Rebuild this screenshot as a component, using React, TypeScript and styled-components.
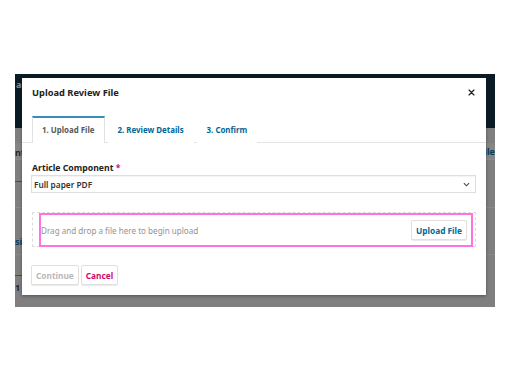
import React from "react";
import styled, { createGlobalStyle } from "styled-components";

const GlobalStyle = createGlobalStyle`
  html, body {
    margin: 0;
    padding: 0;
    background: #ffffff;
    font-family: "Noto Sans", "Open Sans", sans-serif;
  }
`;

const Page = styled.div`
  width: 510px;
  height: 382px;
  padding-top: 74px;
  padding-left: 15px;
  box-sizing: border-box;
`;

// dimmed page behind the modal
const Backdrop = styled.div`
  position: relative;
  width: 480px;
  height: 233px;
  background: #7f7f7f;
  display: flex;
  flex-direction: column;
  overflow: hidden;
`;

const DarkBand = styled.div`
  height: 54px;
  flex-shrink: 0;
  background: #0b1b25;
  color: #8a8f93;
  font-size: 9px;
  font-weight: 700;
  padding: 4px 0 0 1px;
  box-sizing: border-box;
`;

const BgRow = styled.div<{ h: number; tone?: string; line?: string; accent?: boolean; align?: string }>`
  position: relative;
  flex-shrink: 0;
  height: ${(p) => p.h}px;
  background: ${(p) => p.tone || "transparent"};
  border-bottom: ${(p) => (p.line ? `1px solid ${p.line}` : "none")};
  display: flex;
  align-items: ${(p) => p.align || "center"};
  justify-content: space-between;
  font-size: 9px;
  font-weight: 700;
  box-sizing: border-box;

  &::after {
    content: "";
    display: ${(p) => (p.accent ? "block" : "none")};
    position: absolute;
    left: 0;
    bottom: -1px;
    width: 7px;
    height: 1px;
    background: #1d5a7c;
  }
`;

const BgText = styled.span<{ color: string; pad?: number }>`
  color: ${(p) => p.color};
  padding-top: ${(p) => p.pad || 0}px;
`;

const Modal = styled.div`
  position: absolute;
  left: 7px;
  top: 4px;
  width: 464px;
  height: 217px;
  background: #ffffff;
  box-shadow: 0 1px 3px rgba(0, 0, 0, 0.35);
  display: flex;
  flex-direction: column;
`;

const Header = styled.div`
  display: flex;
  align-items: center;
  justify-content: space-between;
  height: 28px;
  padding: 0 10px;
`;

const Title = styled.h1`
  margin: 0;
  font-size: 9.3px;
  font-weight: 700;
  color: #222222;
`;

const Close = styled.button`
  border: none;
  background: none;
  padding: 0;
  width: 10px;
  height: 10px;
  display: flex;
  align-items: center;
  justify-content: center;
  cursor: pointer;
`;

const TabBar = styled.div`
  display: flex;
  margin-top: 10px;
  padding-left: 10px;
  border-bottom: 1px solid #e4e4e4;
  height: 27px;
  box-sizing: border-box;
`;

const Tab = styled.div<{ active?: boolean }>`
  display: flex;
  align-items: center;
  padding: 0 9px 1px;
  margin-right: 3px;
  font-size: 7.9px;
  font-weight: 700;
  color: ${(p) => (p.active ? "#5a5a5a" : "#006798")};
  background: #ffffff;
  border-top: 2px solid ${(p) => (p.active ? "#3a8cba" : "transparent")};
  border-left: 1px solid ${(p) => (p.active ? "#e2e2e2" : "transparent")};
  border-right: 1px solid ${(p) => (p.active ? "#e2e2e2" : "transparent")};
  height: 27px;
  box-sizing: border-box;
`;

const Body = styled.div`
  display: flex;
  flex-direction: column;
  padding: 19px 10px 0 9px;
`;

const Label = styled.label`
  font-size: 8.7px;
  font-weight: 700;
  color: #222222;
  padding-left: 1px;
  line-height: 12px;
`;

const Req = styled.span`
  color: #d00a6c;
`;

const Select = styled.div`
  margin-top: 1px;
  height: 18px;
  border: 1px solid #dedede;
  box-shadow: inset 0 1px 1px rgba(0, 0, 0, 0.05);
  display: flex;
  align-items: center;
  justify-content: space-between;
  padding: 0 5px 0 2px;
  font-size: 8.3px;
  font-weight: 600;
  color: #333333;
  box-sizing: border-box;
`;

const DropWrap = styled.div`
  margin-top: 19px;
  margin-left: 1px;
  border: 1px dashed #dcdcdc;
  height: 35px;
  box-sizing: border-box;
  display: flex;
`;

const DropZone = styled.div`
  flex: 1;
  margin: 0 2px -1px 6px;
  border: 2px solid #ff72e2;
  display: flex;
  align-items: center;
  justify-content: space-between;
  padding: 0 4px 0 0;
  box-sizing: border-box;
`;

const DropText = styled.span`
  font-size: 8.1px;
  color: #949494;
`;

const Button = styled.button<{ tone: "blue" | "pink" | "muted" }>`
  height: 20px;
  padding: 0 4px;
  background: #ffffff;
  border: 1px solid #e0e0e0;
  border-radius: 2px;
  box-shadow: 0 1px 0 #eaeaea;
  font-family: "Noto Sans", "Open Sans", sans-serif;
  font-size: 8.3px;
  font-weight: 700;
  color: ${(p) =>
    p.tone === "blue" ? "#006798" : p.tone === "pink" ? "#d00a6c" : "#b8b8b8"};
  cursor: pointer;
`;

const Actions = styled.div`
  display: flex;
  gap: 2px;
  margin-top: 18px;
`;

export default function App() {
  return (
    <>
      <GlobalStyle />
      <Page>
        <Backdrop>
          <DarkBand>al</DarkBand>
          <BgRow h={15} />
          <BgRow h={17} tone="#858585" line="#8c8c8c">
            <BgText color="#1f2a30" pad={3}>nt</BgText>
            <BgText color="#0a3a55">ile</BgText>
          </BgRow>
          <BgRow h={21} accent />
          <BgRow h={27} line="#8a8a8a" />
          <BgRow h={47} line="#8a8a8a">
            <BgText color="#0a3f5e" pad={21}>si</BgText>
          </BgRow>
          <BgRow h={20} accent />
          <BgRow h={32} align="flex-start">
            <BgText color="#1f2a30" pad={6}>1</BgText>
          </BgRow>
          <Modal>
            <Header>
              <Title>Upload Review File</Title>
              <Close aria-label="Close">
                <svg width="7" height="7" viewBox="0 0 10 10">
                  <path
                    d="M1.5 1.5 L8.5 8.5 M8.5 1.5 L1.5 8.5"
                    stroke="#222"
                    strokeWidth="1.8"
                    strokeLinecap="round"
                  />
                </svg>
              </Close>
            </Header>
            <TabBar>
              <Tab active>1. Upload File</Tab>
              <Tab>2. Review Details</Tab>
              <Tab>3. Confirm</Tab>
            </TabBar>
            <Body>
              <Label>
                Article Component <Req>*</Req>
              </Label>
              <Select>
                <span>Full paper PDF</span>
                <svg width="7" height="5" viewBox="0 0 8 5">
                  <path
                    d="M1 1 L4 4 L7 1"
                    fill="none"
                    stroke="#444"
                    strokeWidth="1.2"
                  />
                </svg>
              </Select>
              <DropWrap>
                <DropZone>
                  <DropText>Drag and drop a file here to begin upload</DropText>
                  <Button tone="blue">Upload File</Button>
                </DropZone>
              </DropWrap>
              <Actions>
                <Button tone="muted">Continue</Button>
                <Button tone="pink">Cancel</Button>
              </Actions>
            </Body>
          </Modal>
        </Backdrop>
      </Page>
    </>
  );
}
